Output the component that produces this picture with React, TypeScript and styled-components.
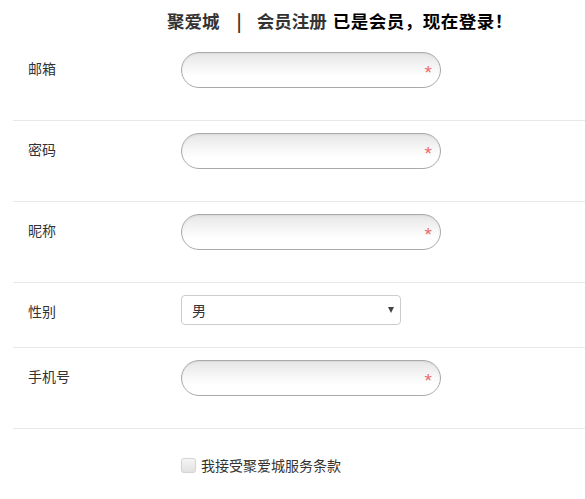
import React from "react"
import styled, { createGlobalStyle } from "styled-components"

const GlobalStyle = createGlobalStyle`
    html, body {
        margin: 0;
        padding: 0;
        background: #fff;
    }
    body {
        font-family: "Noto Sans CJK SC", "Liberation Sans", sans-serif;
        color: #333;
    }
`

const Page = styled.div`
    width: 585px;
    overflow: hidden;
`

const Header = styled.h2`
    margin: 0;
    height: 40px;
    padding-left: 167px;
    display: flex;
    align-items: center;
    font-size: 17.5px;
    font-weight: bold;
    white-space: nowrap;
`

const Brand = styled.span`
    color: #333;
`

const Divider = styled.span`
    color: #333;
    margin: 0 15px 0 17px;
`

const Title = styled.span`
    color: #333;
    margin-right: 6px;
`

const LoginLink = styled.a`
    color: #000;
    text-decoration: none;
    letter-spacing: 0.5px;
`

const Form = styled.form`
    margin-left: 13px;
    width: 700px;
`

const Row = styled.div<{ $bottom: number }>`
    display: flex;
    align-items: flex-start;
    padding: 12px 0 ${(p) => p.$bottom}px;
    border-bottom: 1px solid #e8e8e8;
`

const Label = styled.label`
    width: 168px;
    padding-left: 15px;
    box-sizing: border-box;
    font-size: 14px;
    line-height: 32px;
    color: #333;
`

const FieldWrap = styled.div`
    position: relative;
    width: 260px;
    height: 36px;
`

const TextInput = styled.input`
    width: 100%;
    height: 100%;
    box-sizing: border-box;
    border: 1px solid #aaa;
    border-radius: 18px;
    padding: 0 30px 0 16px;
    font-size: 14px;
    outline: none;
    background: linear-gradient(to bottom, #e6e6e6 0%, #f7f7f7 45%, #fff 70%);
    box-shadow: inset 0 1px 2px rgba(0, 0, 0, 0.06);
`

const Required = styled.span`
    position: absolute;
    right: 9px;
    top: 11px;
    font-family: "Liberation Sans", sans-serif;
    font-size: 19px;
    line-height: 19px;
    color: #e86a6a;
`

const SelectWrap = styled.div`
    position: relative;
    width: 220px;
    height: 30px;
`

const Select = styled.select`
    width: 100%;
    height: 100%;
    appearance: none;
    border: 1px solid #ccc;
    border-radius: 4px;
    background: #fff;
    padding: 0 20px 0 10px;
    font-family: inherit;
    font-size: 14px;
    color: #333;
    outline: none;
`

const Arrow = styled.span`
    position: absolute;
    right: 7px;
    top: 12px;
    width: 0;
    height: 0;
    border-left: 3px solid transparent;
    border-right: 3px solid transparent;
    border-top: 6px solid #444;
    pointer-events: none;
`

const AgreeRow = styled.div`
    display: flex;
    align-items: center;
    padding: 26px 0 0 168px;
    font-size: 14px;
    color: #333;
`

const Check = styled.span`
    width: 13px;
    height: 13px;
    border: 1px solid #d4d4d4;
    border-radius: 3px;
    background: linear-gradient(to bottom, #f4f4f4, #e2e2e2);
    margin-right: 5px;
    box-shadow: 0 0 1px rgba(0, 0, 0, 0.1);
`

const fields = [
    { key: "email", label: "邮箱", type: "text" },
    { key: "password", label: "密码", type: "password" },
    { key: "nick", label: "昵称", type: "text" },
]

const App: React.FC = () => {
    return (
        <Page>
            <GlobalStyle />
            <Header>
                <Brand>聚爱城</Brand>
                <Divider>|</Divider>
                <Title>会员注册</Title>
                <LoginLink href="#">已是会员，现在登录！</LoginLink>
            </Header>
            <Form>
                {fields.map((f) => (
                    <Row key={f.key} $bottom={32}>
                        <Label>{f.label}</Label>
                        <FieldWrap>
                            <TextInput type={f.type} />
                            <Required>*</Required>
                        </FieldWrap>
                    </Row>
                ))}
                <Row $bottom={20}>
                    <Label>性别</Label>
                    <SelectWrap>
                        <Select defaultValue="male">
                            <option value="male">男</option>
                            <option value="female">女</option>
                        </Select>
                        <Arrow />
                    </SelectWrap>
                </Row>
                <Row $bottom={32}>
                    <Label>手机号</Label>
                    <FieldWrap>
                        <TextInput type="text" />
                        <Required>*</Required>
                    </FieldWrap>
                </Row>
                <AgreeRow>
                    <Check />
                    我接受聚爱城服务条款
                </AgreeRow>
            </Form>
        </Page>
    )
}

export default App
